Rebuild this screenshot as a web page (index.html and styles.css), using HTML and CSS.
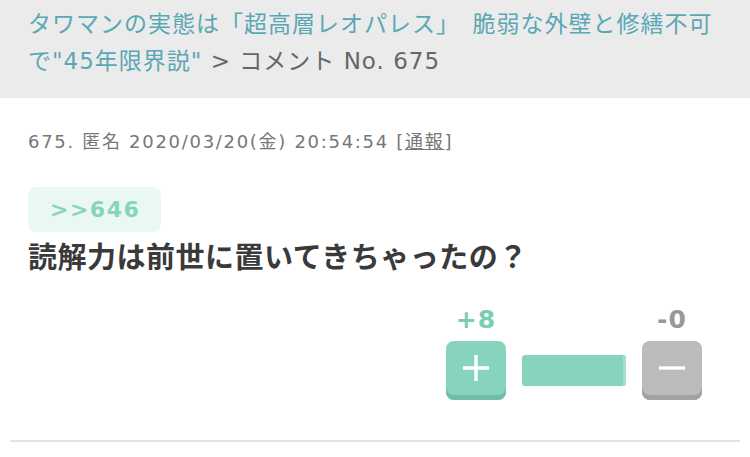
FILE: index.html
```html
<!DOCTYPE html>
<html lang="ja">
<head>
<meta charset="utf-8">
<link rel="stylesheet" href="styles.css">
</head>
<body>
<header class="crumb">
  <a class="crumb-link" href="#">タワマンの実態は「超高層レオパレス」&#12288;脆弱な外壁と修繕不可で"45年限界説"</a><span class="crumb-rest"> &gt; コメント No. 675</span>
</header>
<article class="comment">
  <div class="meta">675. 匿名 2020/03/20(金) 20:54:54 [<a class="report" href="#">通報</a>]</div>
  <a class="anchor" href="#">&gt;&gt;646</a>
  <p class="body">読解力は前世に置いてきちゃったの？</p>
  <div class="votes">
    <div class="vote-col">
      <span class="count count-plus">+8</span>
      <button class="btn btn-plus" aria-label="plus">
        <svg width="30" height="30" viewBox="0 0 30 30"><path d="M15 2v26M2 15h26" stroke="#fff" stroke-width="3.4" stroke-linecap="butt" fill="none"/></svg>
      </button>
    </div>
    <div class="bar"><div class="bar-fill"></div></div>
    <div class="vote-col">
      <span class="count count-minus">-0</span>
      <button class="btn btn-minus" aria-label="minus">
        <svg width="30" height="30" viewBox="0 0 30 30"><path d="M2 15h26" stroke="#fff" stroke-width="3.4" fill="none"/></svg>
      </button>
    </div>
  </div>
</article>
</body>
</html>
```
FILE: styles.css
```css
* { box-sizing: border-box; }
html, body { margin: 0; padding: 0; background: #fff; }
body {
  font-family: "DejaVu Sans", "Noto Sans CJK JP", sans-serif;
  color: #333;
}
.crumb {
  background: #ebebeb;
  height: 98px;
  padding: 6px 20px 0 28px;
  font-size: 23px;
  line-height: 37px;
  letter-spacing: 1px;
  color: #666;
}
.crumb-link { color: #5aa7b6; text-decoration: none; }
.crumb-rest { color: #666; }
.comment {
  margin: 0 10px;
  padding: 32px 18px 40px 18px;
  border-bottom: 2px solid #e3e3e3;
}
.meta {
  font-size: 18px;
  line-height: 24px;
  letter-spacing: 1.7px;
  color: #777;
}
.report { color: #777; text-decoration: underline; }
.anchor {
  display: inline-block;
  margin-top: 33px;
  height: 45px;
  padding: 0 21px 0 22px;
  line-height: 45px;
  background: #eaf8f3;
  border-radius: 8px;
  color: #86d4be;
  font-weight: bold;
  font-size: 22px;
  letter-spacing: 1.5px;
  text-decoration: none;
}
.body {
  margin: 8px 0 0 0;
  font-size: 29px;
  line-height: 36px;
  letter-spacing: 0.5px;
  font-weight: bold;
  color: #3a3a3a;
}
.votes {
  display: flex;
  justify-content: flex-end;
  align-items: flex-end;
  gap: 16px;
  margin-top: 30px;
  padding-right: 20px;
}
.vote-col {
  display: flex;
  flex-direction: column;
  align-items: center;
  gap: 7px;
}
.count {
  font-size: 25px;
  font-weight: bold;
  line-height: 28px;
  letter-spacing: 1px;
}
.count-plus { color: #78cdb4; }
.count-minus { color: #999; }
.btn {
  width: 60px;
  height: 59px;
  border: none;
  border-radius: 8px;
  padding: 0 0 5px 0;
  display: flex;
  align-items: center;
  justify-content: center;
  cursor: pointer;
}
.btn-plus { background: #88d3bd; box-shadow: inset 0 -5px 0 #6fbfa8; }
.btn-minus { background: #bbbbbb; box-shadow: inset 0 -5px 0 #a2a2a2; }
.bar {
  width: 104px;
  height: 31px;
  margin-bottom: 14px;
  background: #dcdcdc;
  border-radius: 3px;
  overflow: hidden;
}
.bar-fill { width: 100%; height: 100%; background: #88d3bd; border-right: 3px solid #a8e0cf; }
```
